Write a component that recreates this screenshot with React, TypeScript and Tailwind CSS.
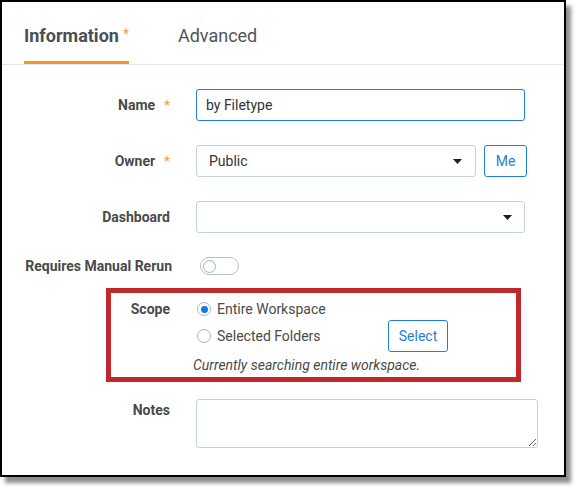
import React from "react";

const font = { fontFamily: "Roboto, 'Noto Sans', Arial, sans-serif" };

function Caret() {
  return (
    <svg width="9" height="5" viewBox="0 0 9 5" className="shrink-0">
      <polygon points="0,0 9,0 4.5,5" fill="#1f1f1f" />
    </svg>
  );
}

function Star() {
  return <span className="ml-[9px] text-[13px] font-bold text-[#f5a342]">*</span>;
}

function Radio({ checked }: { checked?: boolean }) {
  return (
    <span className="flex h-[14px] w-[14px] shrink-0 items-center justify-center rounded-full border border-[#a9b6c4] bg-white">
      {checked && <span className="h-[7px] w-[7px] rounded-full bg-[#1b74e4]" />}
    </span>
  );
}

export default function App() {
  return (
    <div className="h-[491px] w-[580px] bg-white" style={font}>
      <div className="h-[477px] w-[566px] border-2 border-black bg-white shadow-[5px_6px_4px_rgba(0,0,0,0.45)]">
        {/* tabs */}
        <div className="flex h-[63px] gap-[49px] border-b border-[#dfe8f1] pl-[22px]">
          <div className="flex h-[62px] items-start border-b-[3px] border-[#f7951f] pt-[20px]">
            <span className="text-[18px] leading-[28px] font-bold text-[#4a4f54]">Information</span>
            <span className="ml-[4px] text-[14px] leading-[24px] text-[#f7a23f]">*</span>
          </div>
          <div className="flex h-[62px] items-start border-b-[3px] border-transparent pt-[20px]">
            <span className="text-[18px] leading-[28px] text-[#50555b]">Advanced</span>
          </div>
        </div>

        <div className="pt-6">
          {/* Name */}
          <div className="flex h-8 items-center">
            <div className="flex w-[168px] items-center justify-end text-[14px] font-bold text-[#4a4a4a]">
              Name
              <Star />
            </div>
            <div className="ml-[26px] flex h-8 w-[329px] items-center rounded-[3px] border border-[#1f7fd3] px-[9px] text-[14px] text-[#333]">
              by Filetype
            </div>
          </div>

          {/* Owner */}
          <div className="mt-6 flex h-8 items-center">
            <div className="flex w-[168px] items-center justify-end text-[14px] font-bold text-[#4a4a4a]">
              Owner
              <Star />
            </div>
            <div className="ml-[26px] flex h-8 w-[280px] items-center justify-between rounded-[3px] border border-[#c5d2e0] pr-[13px] pl-[12px] text-[14px] text-[#333]">
              Public
              <Caret />
            </div>
            <div className="ml-[8px] flex h-8 w-[43px] items-center justify-center rounded-[3px] border border-[#1f7fd3] text-[14px] text-[#1f7fd3]">
              Me
            </div>
          </div>

          {/* Dashboard */}
          <div className="mt-6 flex h-8 items-center">
            <div className="w-[168px] text-right text-[14px] font-bold text-[#4a4a4a]">Dashboard</div>
            <div className="ml-[26px] flex h-8 w-[329px] items-center justify-end rounded-[3px] border border-[#c5d2e0] pr-[12px]">
              <Caret />
            </div>
          </div>

          {/* toggle */}
          <div className="mt-6 flex h-[18px] items-center">
            <div className="w-[170px] text-right text-[14px] font-bold whitespace-nowrap text-[#4a4a4a]">Requires Manual Rerun</div>
            <div className="ml-[28px] flex h-[18px] w-[39px] items-center rounded-full border border-[#b5c2cf] bg-white px-[2px]">
              <span className="h-[13px] w-[13px] rounded-full border border-[#a6b3c0] bg-white" />
            </div>
          </div>

          {/* scope */}
          <div className="mt-[13px] ml-[104px] h-[94px] w-[415px] border-[5px] border-[#c1272d] pt-[5px]">
            <div className="flex">
              <div className="w-[59px] text-right text-[14px] leading-[22px] font-bold text-[#4a4a4a]">Scope</div>
              <div className="ml-[27px] flex flex-col">
                <div className="flex h-[22px] items-center gap-[6px] text-[14px] text-[#4a4a4a]">
                  <Radio checked />
                  Entire Workspace
                </div>
                <div className="flex h-8 items-center">
                  <div className="flex w-[191px] items-center gap-[6px] text-[14px] text-[#4a4a4a]">
                    <Radio />
                    Selected Folders
                  </div>
                  <div className="flex h-8 w-[60px] items-center justify-center rounded-[3px] border border-[#1f7fd3] text-[14px] text-[#1f7fd3]">
                    Select
                  </div>
                </div>
                <div className="mt-[3px] -ml-1 text-[14px] leading-5 whitespace-nowrap text-[#4a4a4a] italic">
                  Currently searching entire workspace.
                </div>
              </div>
            </div>
          </div>

          {/* notes */}
          <div className="mt-[17px] flex items-start">
            <div className="w-[168px] pt-[1px] text-right text-[14px] leading-5 font-bold text-[#4a4a4a]">Notes</div>
            <textarea
              className="ml-[26px] h-[49px] w-[342px] rounded-[3px] border border-[#c5d2e0] bg-white px-[9px] py-[6px] text-[14px] outline-none"
              defaultValue=""
            />
          </div>
        </div>
      </div>
    </div>
  );
}
